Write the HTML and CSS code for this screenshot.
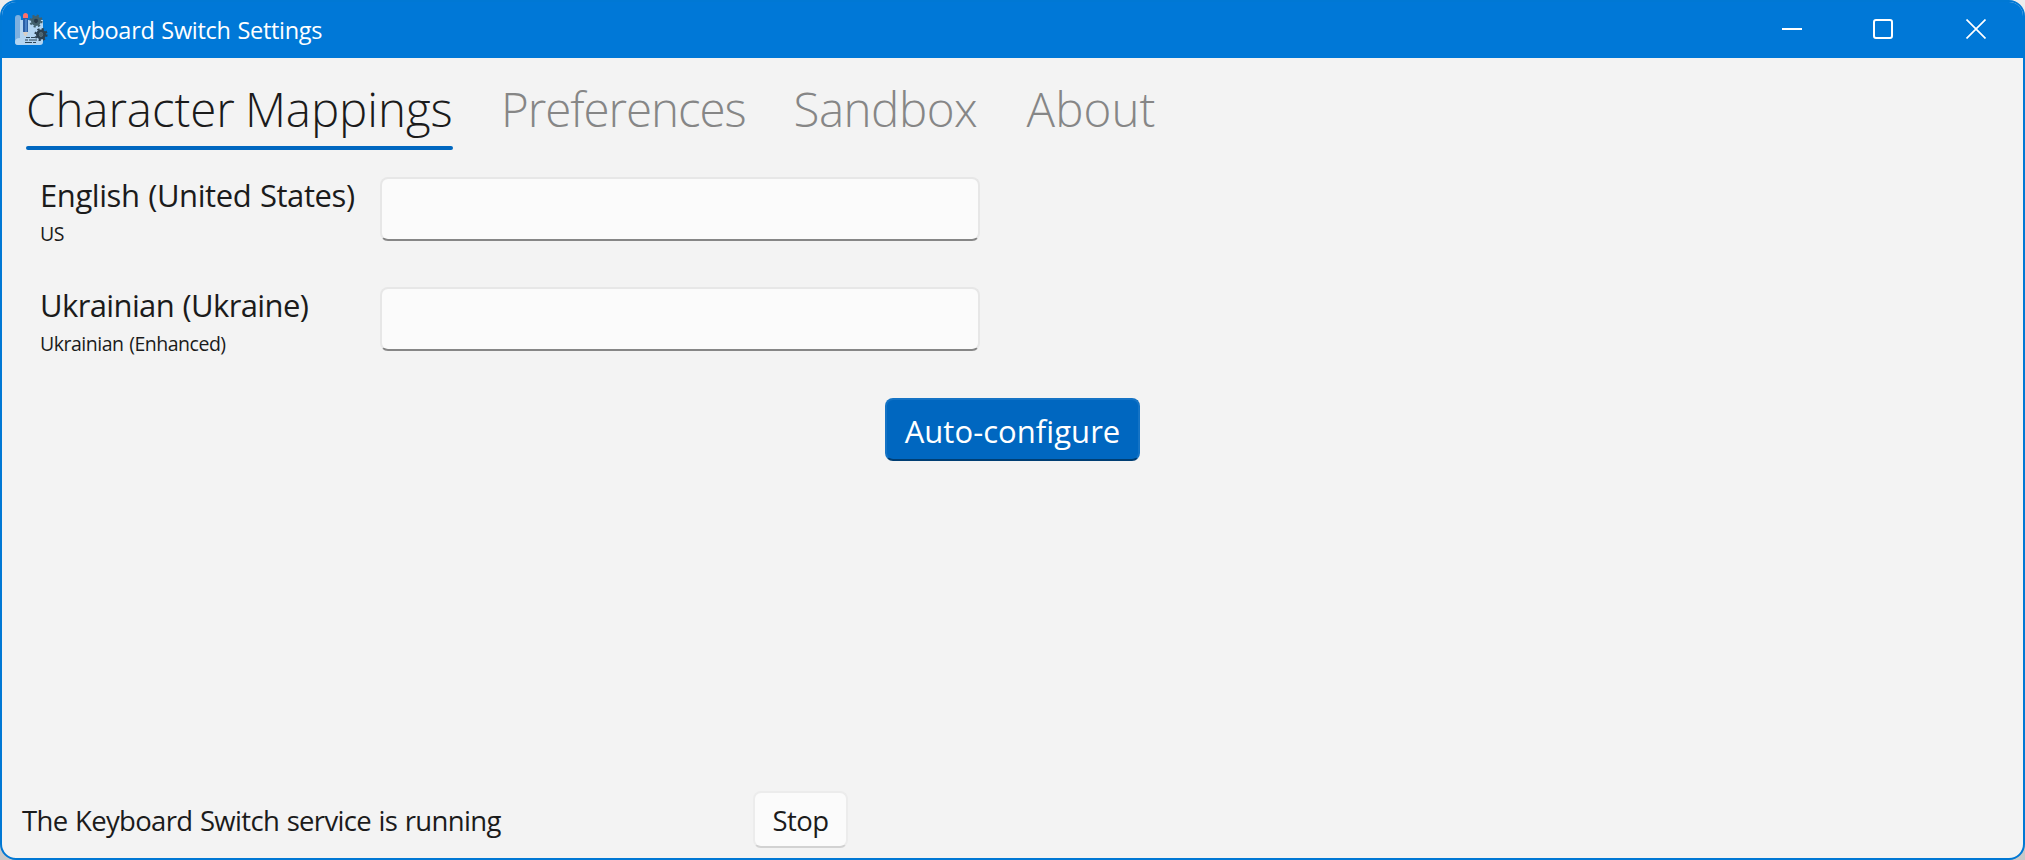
FILE: index.html
```html
<!DOCTYPE html>
<html lang="en">
<head>
<meta charset="utf-8">
<title>Keyboard Switch Settings</title>
<link rel="stylesheet" href="styles.css">
</head>
<body>
<div class="window">
  <header class="titlebar">
    <svg class="app-icon" width="33" height="33" viewBox="0 0 33 33">
      <path d="M3 2 Q0 2 0 5 V29 Q0 32 3 32 H6 V5 Q6 2 3 2Z" fill="#7eb0e0"/>
      <path d="M5 7 H28 V29 Q28 32 25 32 H3 Q0 32 0 29 Q0 25 5 25Z" fill="#b3d5f2"/>
      <rect x="8" y="4" width="5" height="15" fill="#2b5fa5"/>
      <rect x="10" y="6" width="2" height="13" fill="#4a82c6"/>
      <path d="M8 19 H13 L11.500 23 H9.500Z" fill="#d8cfc5"/>
      <path d="M8 5 V2.500 Q8 0 10.500 0 T13 2.500 V5Z" fill="#ff7069"/>
      <path d="M11 24.500 H15 M16 24.500 H20 M10 27 H13 M14 27 H22 M10 29.500 H17 M18 29.500 H21" stroke="#2d4658" stroke-width="1"/>
      <circle cx="21" cy="8" r="3.500" fill="none" stroke="#42606c" stroke-width="3"/>
      <circle cx="21" cy="8" r="5.600" fill="none" stroke="#42606c" stroke-width="2" stroke-dasharray="2.200"/>
      <circle cx="21" cy="8" r="2.200" fill="#263a49"/>
      <circle cx="26" cy="21.500" r="3.500" fill="none" stroke="#2b4050" stroke-width="3"/>
      <circle cx="26" cy="21.500" r="5.600" fill="none" stroke="#2b4050" stroke-width="2" stroke-dasharray="2.200"/>
      <circle cx="26" cy="21.500" r="2.200" fill="#4b6571"/>
    </svg>
    <span class="title">Keyboard Switch Settings</span>
    <div class="controls">
      <svg width="20" height="20" viewBox="0 0 20 20"><path d="M0 10H20"/></svg>
      <svg width="20" height="20" viewBox="0 0 20 20"><rect x="1" y="1" width="18" height="18" rx="2"/></svg>
      <svg width="20" height="20" viewBox="0 0 20 20"><path class="thin" d="M.5 .5L19.500 19.500M19.500 .5L.5 19.500"/></svg>
    </div>
  </header>
  <nav class="tabs">
    <span class="tab mappings">Character Mappings</span>
    <span class="tab preferences">Preferences</span>
    <span class="tab sandbox">Sandbox</span>
    <span class="tab about">About</span>
  </nav>
  <main class="content">
    <div class="row">
      <div class="layout"><span class="language english">English (United States)</span><span class="variant">US</span></div>
      <input class="characters" type="text" aria-label="English characters">
    </div>
    <div class="row">
      <div class="layout"><span class="language ukrainian">Ukrainian (Ukraine)</span><span class="variant">Ukrainian (Enhanced)</span></div>
      <input class="characters" type="text" aria-label="Ukrainian characters">
    </div>
    <button class="primary">Auto-configure</button>
  </main>
  <footer class="status">
    <span class="status-text">The Keyboard Switch service is running</span>
    <button class="stop">Stop</button>
  </footer>
</div>
</body>
</html>
```
FILE: styles.css
```css
* { box-sizing: border-box; }
html, body { height: 100%; }
body {
  margin: 0;
  background: linear-gradient(#ededed, #c8c8c8);
  font-family: "Open Sans", sans-serif;
  color: #1b1b1b;
  white-space: nowrap;
}
.window {
  display: flex;
  flex-direction: column;
  height: 860px;
  border: 2px solid #0078d4;
  border-radius: 16px;
  background: #f3f3f3;
  overflow: hidden;
}
.titlebar {
  display: flex;
  align-items: center;
  height: 56px;
  flex: none;
  padding: 0 37px 0 13px;
  background: #0078d7;
  color: #fff;
}
.app-icon { margin-bottom: 1px; }
.title {
  margin-left: 4px;
  font-size: 23.5px;
  line-height: 32px;
  letter-spacing: -.3px;
  word-spacing: 1px;
}
.controls {
  display: flex;
  gap: 73px;
  margin-left: auto;
  margin-bottom: 2px;
}
.controls svg { fill: none; stroke: #fff; stroke-width: 2; }
.controls svg:first-child { margin-right: -2px; }
.controls .thin { stroke-width: 1.7; }
.tabs {
  display: flex;
  flex: none;
  gap: 46px;
  padding: 18px 24px 0;
  font-size: 47.5px;
  font-weight: 300;
  line-height: 66px;
  color: #868686;
}
.tab { position: relative; height: 74px; }
.mappings { width: 429px; letter-spacing: -.08px; word-spacing: -2px; color: #1b1b1b; }
.mappings::after {
  content: "";
  position: absolute;
  left: 0;
  right: 2px;
  bottom: 0;
  height: 4px;
  border-radius: 2px;
  background: #0067c0;
}
.preferences { width: 246.5px; letter-spacing: -1.05px; }
.sandbox { width: 187px; letter-spacing: -.5px; }
.about { letter-spacing: .1px; }
.content {
  display: flex;
  flex-direction: column;
  flex: 1;
  gap: 46px;
  padding: 27px 0 0 38px;
}
.row { display: flex; height: 64px; }
.layout { display: flex; flex-direction: column; width: 340px; }
.language { font-size: 31px; line-height: 37px; word-spacing: 1px; }
.english { letter-spacing: -.42px; }
.ukrainian { letter-spacing: -.62px; }
.variant {
  margin-top: 6px;
  font-size: 19.5px;
  line-height: 28px;
  letter-spacing: -.48px;
  word-spacing: 1px;
}
.characters {
  width: 600px;
  height: 64px;
  border: 2px solid #e7e7e7;
  border-bottom-color: #868686;
  border-radius: 8px;
  background: #fbfbfb;
}
button { padding: 0; font-family: inherit; text-align: center; }
.primary {
  align-self: center;
  width: 255px;
  height: 63px;
  margin: 1px 38px 0 0;
  border: 2px solid #1473c5;
  border-bottom-color: #003e73;
  border-radius: 8px;
  padding-top: 4px;
  background: #0067c0;
  color: #fff;
  font-size: 31px;
  line-height: 55px;
  letter-spacing: .05px;
}
.status {
  display: flex;
  align-items: center;
  height: 76px;
  padding: 0 20px 2px;
}
.status-text {
  width: 731px;
  padding-top: 4px;
  font-size: 27.5px;
  line-height: 38px;
  letter-spacing: -.66px;
  word-spacing: 1px;
}
.stop {
  width: 95px;
  height: 57px;
  border: 2px solid #ececec;
  border-bottom-color: #d2d2d2;
  border-radius: 8px;
  padding-top: 3px;
  background: #fbfbfb;
  color: #1b1b1b;
  font-size: 27.5px;
  line-height: 50px;
  letter-spacing: -.6px;
}
```
